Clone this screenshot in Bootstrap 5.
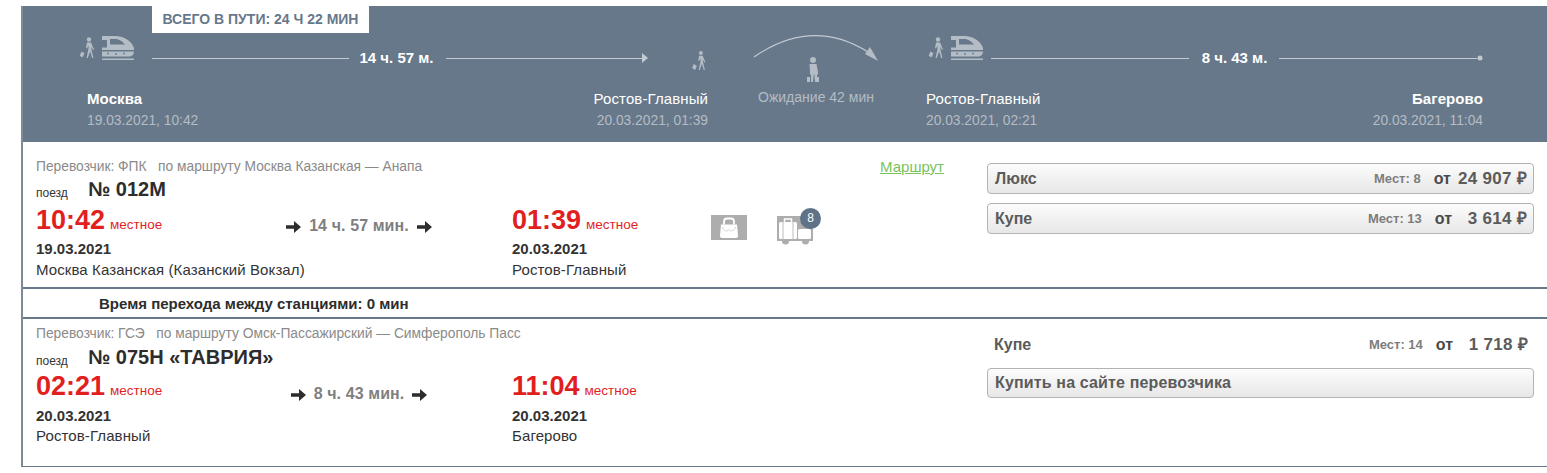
<!DOCTYPE html>
<html lang="ru"><head><meta charset="utf-8"><title>Маршрут</title>
<link rel="stylesheet" href="https://cdn.jsdelivr.net/npm/bootstrap@5.3.0/dist/css/bootstrap.min.css">
<style>
html,body{overflow:hidden;background:#fff}
body{font-family:"Liberation Sans",Arial,sans-serif;font-size:14px;color:#333}
.wrapx{margin:6px 0 0 21px;border-left:2px solid #7f8b97;border-bottom:1px solid #67788a;height:461px}
.headx{background:#67788a;height:136px;color:#fff}
.tagrow{height:27px;padding-left:129px}
.tagx{background:#fff;color:#67788a;font-weight:700;font-size:14px;width:217px;height:27px;line-height:26px;text-align:center;white-space:nowrap}
.segs{padding-left:55px}
.seg1{width:630px}.seg2{width:128px;margin-left:44px}.seg3{width:562px;margin-left:41px}
.trackx{height:50px}
.tricon{margin:3px 17px 0 1px}
.seg3 .tricon{margin:3px 7px 0 7px}
.linex{flex:1 1 0;height:1px;background:#c3cad1}
.durx{font-weight:700;padding:0 12px 0 11px;font-size:15px;line-height:16px;white-space:nowrap}
.seg3 .durx{padding:0 12px 0 13px}
.walkm{margin:17px 0 0 44px}
.lblx{margin-top:6px;padding-left:9px}
.seg3 .lblx{padding-left:5px}
.cityx{line-height:20px;height:22px;font-size:15px;letter-spacing:.1px}
.datex{line-height:20px;color:#b4bcc5;font-size:13.8px}
.waitx{color:#b4bcc5;text-align:center;line-height:16px;margin-top:4px}
.legx{height:145px;padding:15px 13px 0}
.lefta{width:908px;flex-shrink:0}
.carr{font-size:13.8px;color:#8a8a8a;line-height:20px;height:19px;white-space:nowrap}
.routelk{color:#79c35c;font-size:15px}
.trainx{height:26px;line-height:26px}
.trsm{font-size:12px;width:52px;padding-top:4px}
.trno{font-size:20px;font-weight:700;color:#2d2d2d}
.deptc{width:476px;height:84px}
.depin{width:245px}
.arrc{width:199px}
.timex{font-size:27px;font-weight:700;color:#e21f1f;line-height:30px;margin-top:3px}
.localx{font-size:13.5px;font-weight:400;color:#e21f1f;margin-left:5px}
.dayx{font-weight:700;line-height:20px;margin-top:-1px;font-size:15px;color:#333}
.stnx{line-height:22px;letter-spacing:.1px;font-size:15px;white-space:nowrap}
.durr{width:156px;font-weight:700;font-size:16px;color:#7f7f7f;padding-top:12px;white-space:nowrap;letter-spacing:.1px}
.durr svg{margin:0 8px}
.durr svg:first-child{margin-left:0}
.durr svg:last-child{margin-right:0}
.bagsx{padding-top:13px}
.bag1{width:36px;height:25px;background:#adadad;margin-right:30px}
.bag2{width:36px;height:30px;margin-top:1px}
.numx{width:21px;height:21px;background:#5f7287;color:#fff;font-size:12px;line-height:21px;border-radius:50%;text-align:center;top:-8px;right:-8px}
.rightb{width:547px;margin-left:43px;padding-top:6px;flex-shrink:0}
.fare{background:linear-gradient(#fcfcfc,#e7e7e7);border:1px solid #b3b3b3;border-radius:4px;height:31px;padding:0 6px 0 7px;color:#5b5b5b;font-weight:700;font-size:16px;line-height:28px;width:100%;text-align:left}
.fare+.fare{margin-top:9px}
.seatsx{font-size:13px;color:#7d7d7d;margin-right:13px}
.otx{font-size:16px;color:#4a4a4a;margin-right:7px}
.pricex{font-size:17px;color:#5b5b5b;min-width:68px;text-align:right;white-space:nowrap;letter-spacing:.3px}
.gapx{border-top:2px solid #67788a;border-bottom:2px solid #67788a;padding:1px 0 0 76px;font-weight:700;font-size:15px;line-height:27px;color:#2d2d2d;box-sizing:content-box;height:27px}
.legy{height:145px;padding:5px 13px 0}
.legy .carr{height:20px}
.legy .timex{margin-top:1px}
.legy .dayx{margin-top:0}
.legy .stnx{margin-top:-1px}
.plain{height:26px;padding:0 6px 0 7px;margin-top:2px;line-height:26px;color:#5b5b5b;font-weight:700;font-size:16px}
.buyb{margin-top:10px;height:30px;letter-spacing:.15px}
</style></head><body>
<div class="wrapx">
 <div class="headx">
  <div class="tagrow"><div class="tagx">ВСЕГО В ПУТИ: 24 Ч 22 МИН</div></div>
  <div class="d-flex segs">
   <div class="seg1">
    <div class="d-flex trackx">
     <svg width="56" height="26" viewBox="0 0 56 26" class="tricon flex-shrink-0"><use href="#walktrain"/></svg>
     <div class="d-flex align-items-center flex-grow-1">
      <div class="linex"></div><div class="durx">14 ч. 57 м.</div>
      <div class="linex"></div>
      <svg width="6" height="10" viewBox="0 0 6 10"><path d="M0 0l6 5-6 5z" fill="#c3cad1"/></svg>
     </div>
     <svg width="16" height="22" viewBox="0 0 18 24" class="flex-shrink-0 walkm"><use href="#walker" /></svg>
    </div>
    <div class="d-flex justify-content-between lblx">
     <div><div class="cityx fw-bold">Москва</div><div class="datex">19.03.2021, 10:42</div></div>
     <div class="text-end"><div class="cityx">Ростов-Главный</div><div class="datex">20.03.2021, 01:39</div></div>
    </div>
   </div>
   <div class="seg2">
    <svg width="128" height="52" viewBox="0 0 128 52" class="d-block">
     <path d="M2 24Q60-16 116 19" fill="none" stroke="#c3cad1" stroke-width="1.200"/>
     <path d="M126 28L118 14l-5 7z" fill="#b4bcc5"/>
     <g fill="#b4bcc5"><circle cx="61" cy="27" r="3"/><path d="M57.500 31h7l1.500 8v2l-1 1v7h-2l-.8-8h-.4l-.8 8h-2v-7l-1-1v-2zM55 44h3v5h-3zM64 44h3v5h-3z"/></g>
    </svg>
    <div class="waitx">Ожидание 42 мин</div>
   </div>
   <div class="seg3">
    <div class="d-flex trackx">
     <svg width="56" height="26" viewBox="0 0 56 26" class="tricon flex-shrink-0"><use href="#walktrain"/></svg>
     <div class="d-flex align-items-center flex-grow-1">
      <div class="linex"></div><div class="durx">8 ч. 43 м.</div>
      <div class="linex"></div>
      <svg width="6" height="6" viewBox="0 0 6 6"><circle cx="3" cy="3" r="2.500" fill="#c3cad1"/></svg>
     </div>
    </div>
    <div class="d-flex justify-content-between lblx">
     <div><div class="cityx">Ростов-Главный</div><div class="datex">20.03.2021, 02:21</div></div>
     <div class="text-end"><div class="cityx fw-bold">Багерово</div><div class="datex">20.03.2021, 11:04</div></div>
    </div>
   </div>
  </div>
 </div>

 <div class="d-flex legx">
  <div class="lefta">
   <div class="d-flex justify-content-between carr"><span>Перевозчик: ФПК &nbsp; по маршруту Москва Казанская — Анапа</span><a href="#" class="routelk">Маршрут</a></div>
   <div class="d-flex trainx"><span class="trsm">поезд</span><span class="trno">№ 012М</span></div>
   <div class="d-flex">
    <div class="d-flex deptc">
     <div class="depin"><div class="timex">10:42<span class="localx">местное</span></div><div class="dayx">19.03.2021</div><div class="stnx">Москва Казанская (Казанский Вокзал)</div></div>
     <div class="durr text-center"><svg width="15" height="12" viewBox="0 0 15 12"><use href="#arw"/></svg>14 ч. 57 мин.<svg width="15" height="12" viewBox="0 0 15 12"><use href="#arw"/></svg></div>
    </div>
    <div class="arrc"><div class="timex">01:39<span class="localx">местное</span></div><div class="dayx">20.03.2021</div><div class="stnx">Ростов-Главный</div></div>
    <div class="d-flex bagsx">
     <div class="bag1"><svg width="36" height="25" viewBox="0 0 36 25" class="d-block"><use href="#bagw"/></svg></div>
     <div class="bag2 position-relative"><svg width="36" height="30" viewBox="0 0 36 30" class="d-block"><use href="#lugg"/></svg><span class="numx position-absolute">8</span></div>
    </div>
   </div>
  </div>
  <div class="rightb">
   <button type="button" class="btn fare d-flex align-items-center"><span class="me-auto">Люкс</span><span class="seatsx">Мест: 8</span><span class="otx">от</span><span class="pricex">24 907 ₽</span></button>
   <button type="button" class="btn fare d-flex align-items-center"><span class="me-auto">Купе</span><span class="seatsx">Мест: 13</span><span class="otx">от</span><span class="pricex">3 614 ₽</span></button>
  </div>
 </div>

 <div class="gapx">Время перехода между станциями: 0 мин</div>

 <div class="d-flex legy">
  <div class="lefta">
   <div class="carr">Перевозчик: ГСЭ &nbsp; по маршруту Омск-Пассажирский — Симферополь Пасс</div>
   <div class="d-flex trainx"><span class="trsm">поезд</span><span class="trno">№ 075Н «ТАВРИЯ»</span></div>
   <div class="d-flex">
    <div class="d-flex deptc">
     <div class="depin"><div class="timex">02:21<span class="localx">местное</span></div><div class="dayx">20.03.2021</div><div class="stnx">Ростов-Главный</div></div>
     <div class="durr text-center"><svg width="15" height="12" viewBox="0 0 15 12"><use href="#arw"/></svg>8 ч. 43 мин.<svg width="15" height="12" viewBox="0 0 15 12"><use href="#arw"/></svg></div>
    </div>
    <div class="arrc"><div class="timex">11:04<span class="localx">местное</span></div><div class="dayx">20.03.2021</div><div class="stnx">Багерово</div></div>
   </div>
  </div>
  <div class="rightb">
   <div class="d-flex align-items-center plain"><span class="me-auto">Купе</span><span class="seatsx">Мест: 14</span><span class="otx">от</span><span class="pricex">1 718 ₽</span></div>
   <button type="button" class="btn fare buyb">Купить на сайте перевозчика</button>
  </div>
 </div>
</div>

<svg width="0" height="0" class="d-none" aria-hidden="true"><defs>
 <g id="walker" fill="#b4bcc5"><circle cx="10" cy="3" r="2.200"/><path d="M8 6h4l3 7-1 .6-2-3.600.6 4 1.900 8h-1.300l-2-7-2.500 7H7.500l2-9V9l-1.500 3-1-.5zM2 15.500l3.500 2-2 4.500-3.500-2z"/></g>
 <g id="walktrain">
  <g fill="#b4bcc5"><circle cx="10" cy="3.500" r="2.200"/><path d="M8 6.500h4l3 7-1 .6-2-3.600.6 4 1.900 7.500h-1.300l-2-6.500-2.500 6.500H7.500l2-9V9.500l-1.500 3-1-.5zM2.500 15.500l3 1.800-2 4.200-2.800-1.800z"/></g>
  <path d="M23 0h13c10 0 17 6 19 12v2H23v-2.500h5V4h-5zM31 3v5.500h15c-2.500-3-5.500-5.500-10-5.500z" fill="#b4bcc5" fill-rule="evenodd"/>
  <path d="M23 15.500h32c0 3-2.500 5-5 5H23z" fill="#b4bcc5"/>
  <g fill="#67788a"><circle cx="29" cy="17.500" r=".9"/><circle cx="37" cy="18" r=".9"/><circle cx="45" cy="17.500" r=".9"/></g>
  <rect x="23" y="22.500" width="32" height="1.500" fill="#b4bcc5"/>
 </g>
 <path id="arw" d="M0 4.300h8V0l7 6-7 6V7.700H0z" fill="#2d2d2d"/>
 <g id="bagw"><path d="M10 9.500h16l1 11.500q0 2-2 2H11q-2 0-2-2z" fill="#fff"/><path d="M13 9.500V6.500q0-3 3-3h4q3 0 3 3v3" fill="none" stroke="#fff" stroke-width="1.800"/><path d="M11.500 12c.5 4 5 5 6.500 2.500 1.500 2.500 6 1.500 6.500-2.500" fill="none" stroke="#c8c8c8" stroke-width=".8"/></g>
 <g id="lugg"><rect width="36" height="25" fill="#adadad"/><circle cx="8.500" cy="25" r="3.500" fill="#adadad"/><circle cx="28.500" cy="25" r="3.500" fill="#adadad"/><rect x="2" y="6" width="18" height="17" rx="1.500" fill="#fff"/><path d="M7.500 6V3h7v3" fill="none" stroke="#fff" stroke-width="1.500"/><path d="M6 6v17M16 6v17" stroke="#adadad" stroke-width=".8"/><rect x="21" y="13" width="13" height="10" rx="1.500" fill="#fff"/></g>
</defs></svg>
</body></html>
